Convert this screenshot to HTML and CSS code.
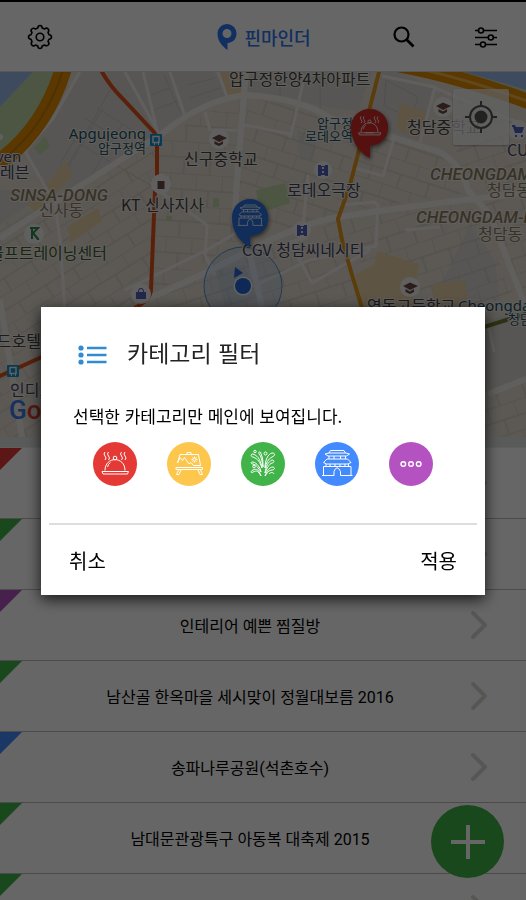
FILE: index.html
```html
<!DOCTYPE html>
<html lang="ko">
<head>
<meta charset="utf-8">
<meta name="viewport" content="width=device-width, initial-scale=1">
<title>핀마인더</title>
<link rel="stylesheet" href="styles.css">
</head>
<body>
<svg class="sprite" width="0" height="0" aria-hidden="true">
  <symbol id="dish" viewBox="0 0 44 44">
    <path d="M12 28.5C12 14 32 14 32 28.5M9 29.5H35.5L34.5 32H10ZM17 29.5h10M14.500 25q.5-3 3-4.500M12 10q-2 2 0 4t0 4M15.500 10q-2 2 0 4t0 4M28.500 10q-2 2 0 4t0 4M32 10q-2 2 0 4t0 4"/>
    <circle cx="22" cy="16" r="1.800"/>
  </symbol>
  <symbol id="easel" viewBox="0 0 44 44">
    <path d="M10.500 21L13 12.500H31.500L33.500 23.500H26.500L24 20.500L22 22L17.500 15.500L15.500 18.500L13 15.500L10.500 21M20 12.500V10.500H24V12.500M9 25.500H35.500V27.500H9ZM11.500 28L9.500 32.500H12L14 28M31 28L33 32.500H35.500L33.500 28M27.500 14.500V20.500M24.500 17.500H30.500M25.500 15.500L29.500 19.500M29.500 15.500L25.500 19.500"/>
    <circle cx="27.500" cy="17.500" r="1.600" fill="#fdc64c"/>
  </symbol>
  <symbol id="nature" viewBox="0 0 44 44">
    <path d="M20 34C18 28 16 26 12 28C9 29 10 32 12 30C16 28 17 29 20 34M20 30C19 25 16 21 12 20C9 20 10 22 12 22C16 23 17 26 20 30M21 26C20 20 18 14 12 12C9 12 10 15 12 15C17 17 19 20 21 26M22 25C21 18 20 14 18 12C17 9 20 9 20 12C22 16 22 20 22 25M24 26C24 18 27 12 31 11C35 11 34 14 31 15C27 17 25 21 24 26M24 31C25 24 27 20 31 18C34 18 33 21 31 21C28 22 26 26 24 31M24 34C26 29 28 25 32 25C35 26 33 28 31 28C28 28 26 31 24 34M28 32C30 30 32 30 33 32"/>
    <circle cx="24.500" cy="11.500" r="1.500"/><circle cx="14" cy="9.500" r="1.200"/><circle cx="13" cy="24.500" r="1.300"/>
  </symbol>
  <symbol id="gate" viewBox="0 0 44 44">
    <path d="M15.500 8.500H29L30.500 11L34.500 12L31.500 14H13L10 12L14 11ZM14 11H30.500M14 14V17M19 14V17M25.500 14V17M30.500 14V17M12 17H32.500L36 20.500L33 22H11.500L8.500 20.500ZM11 22V24M15 22V24M20 22V24M25 22V24M30 22V24M33.500 22V24M8.500 24.500H36M8.500 24.500V33M36 24.500V33M7 33.500H19V29.500Q22 22 25.500 29.500V33.500H37.500"/>
  </symbol>
  <symbol id="dots" viewBox="0 0 44 44">
    <g stroke-width="1.400"><circle cx="14.300" cy="22" r="2.300"/><circle cx="22" cy="22" r="2.300"/><circle cx="29.700" cy="22" r="2.300"/></g>
  </symbol>
  <symbol id="chevron" viewBox="0 0 18 30">
    <path d="M3 3L15 15L3 27" stroke-width="4" stroke-linecap="round" stroke-linejoin="round"/>
  </symbol>
</svg>

<div class="app">
  <header class="topbar">
    <button class="icon-button" aria-label="설정">
      <svg width="26" height="26" viewBox="0 0 26 26" fill="none" stroke="#000" stroke-width="1.600" stroke-linejoin="round"><path d="M10.800 4Q11 1.500 13 1.500T15.200 4L17.500 5Q19.500 3.200 21 4.800T21 8.500L22 10.800Q24.500 11 24.500 13T22 15.200L21 17.500Q22.800 19.500 21.200 21T17.500 21L15.200 22Q15 24.500 13 24.500T10.800 22L8.500 21Q6.500 22.800 5 21.200T5 17.500L4 15.200Q1.500 15 1.500 13T4 10.800L5 8.500Q3.200 6.500 4.800 5T8.500 5Z"/><circle cx="13" cy="13" r="3.800"/></svg>
    </button>
    <h1 class="brand">
      <svg width="20" height="26" viewBox="0 0 20 26" aria-hidden="true"><path fill="#2b75f0" fill-rule="evenodd" d="M10 0A9.500 9.500 0 0 1 19.500 9.500C19.500 15 16 18.500 10.500 19V26C5 22 .5 17 .5 9.500A9.500 9.500 0 0 1 10 0ZM10 5A4.500 4.500 0 1 0 10 14A4.500 4.500 0 1 0 10 5Z"/></svg>
      <span>핀마인더</span>
    </h1>
    <div class="tools">
      <button class="icon-button" aria-label="검색">
        <svg width="22" height="22" viewBox="0 0 22 22" fill="none" stroke="#000" stroke-width="2.200"><circle cx="8.500" cy="8.500" r="7"/><path d="M13.500 13.500L20.500 20.500" stroke-width="2.800"/></svg>
      </button>
      <button class="icon-button" aria-label="필터">
        <svg width="22" height="22" viewBox="0 0 22 22" fill="none" stroke="#000" stroke-width="1.600"><path d="M0 4.500H3.500M8.500 4.500H22M0 11.500H13M18.500 11.500H22M0 18.500H5.500M10.500 18.500H22"/><circle cx="6" cy="4.500" r="2.500"/><circle cx="15.800" cy="11.500" r="2.500"/><circle cx="8" cy="18.500" r="2.500"/></svg>
      </button>
    </div>
  </header>

  <section class="map" aria-label="지도">
    <svg class="map-canvas" viewBox="0 72 526 365" preserveAspectRatio="xMidYMid slice">
      <defs>
        <pattern id="blocksA" width="26" height="32" patternUnits="userSpaceOnUse" patternTransform="rotate(4)"><path d="M0 0H26M0 16H26M0 0V16M13 16V32"/></pattern>
        <pattern id="blocksB" width="32" height="28" patternUnits="userSpaceOnUse" patternTransform="rotate(-32)"><path d="M0 0H32M0 14H32M0 0V14M16 14V28"/></pattern>
        <pattern id="blocksC" width="30" height="28" patternUnits="userSpaceOnUse" patternTransform="rotate(18)"><path d="M0 0H30M0 14H30M0 0V14M15 14V28"/></pattern>
        <pattern id="blocksD" width="28" height="30" patternUnits="userSpaceOnUse" patternTransform="rotate(-18)"><path d="M0 0H28M0 15H28M0 0V15M14 15V30"/></pattern>
      </defs>
      <rect y="72" width="526" height="365" fill="#e6dfd4"/>
      <g fill="#d9d7d2">
        <path d="M80 72H215L227 98L160 135L70 190L42 185L28 152Z"/>
        <path d="M250 72H372L358 112L246 93Z"/>
        <path d="M382 72H400L435 88L420 142L368 122Z"/>
        <path d="M0 190H42L28 205L0 225Z"/>
        <path d="M297 130L318 138L310 160H300Z"/>
        <path d="M470 225L495 260L500 300L435 297Z"/>
        <path d="M485 320L526 310V375L485 393Z"/>
        <path d="M215 270L245 265L258 300L225 307Z"/>
      </g>
      <g class="blocks">
        <path fill="url(#blocksB)" d="M0 225L70 195L160 138L152 295L135 307H41V437H0Z"/>
        <path fill="url(#blocksA)" d="M160 138L240 97V240L152 295Z"/>
        <path fill="url(#blocksC)" d="M240 97L305 108L360 125L340 215L240 240ZM365 125L440 155L470 192L345 212Z"/>
        <path fill="url(#blocksD)" d="M152 297L340 220L360 307H152ZM345 220L470 202L520 307H365ZM440 92L526 125V195L478 190L460 165ZM480 202L526 198V295ZM485 395L526 375V437H485Z"/>
      </g>
      <g fill="none" stroke="#c9c6c1" stroke-width="1">
        <path d="M60 164L75 139M68 168L103 108M90 178L122 124M73 140L150 185M97 108L132 130M110 90L68 165M84 118L118 138M151 95L170 88M154 110L178 101M164 75L180 112M187 85L215 78M190 98L220 88M265 83H365M280 76V102M320 76V109M386 80L418 97L411 118L384 106Z"/>
      </g>
      <g fill="#e9d2a7">
        <path d="M42 190L65 160L73 175L38 213L27 205Z"/><path d="M218 72H245L240 97H228Z"/>
        <path d="M68 226L98 208L102 221L70 243Z"/><path d="M400 103L426 112L419 140L396 128Z"/>
        <path d="M377 251L419 264L412 307H362L355 274L374 265Z"/><path d="M434 284L465 280L468 307H432Z"/>
      </g>
      <g fill="#c0d6a5">
        <path d="M33 72H60L45 108L18 144L0 157V107Z"/><path d="M256 190L285 183L290 203L260 213Z"/><path d="M34 148L45 136L50 146L40 155ZM166 216h6v5h-6zM213 198h6v9h-6z"/>
      </g>
      <path fill="#9bbcec" d="M0 72H33L0 107ZM462 72H526V90Z"/>
      <path fill="#c6d9ae" d="M450 72H464L526 90V96Z"/>
      <g class="roads">
        <path d="M80 72L52 120L25 151L50 195M125 72L158 132M143 72L157 130M170 72L185 116M218 72L227 97M205 112L210 130L240 130M240 124L290 134M305 75L290 138M53 190L60 240L65 310M125 290L207 250L263 217M158 190L207 225L205 255L215 275M256 285L310 260L376 246L378 205L374 202L340 205M307 238L290 242L312 283L370 250M395 135L383 176L355 168M382 76L435 87L420 142M435 88L526 126M405 230L440 227M488 324L494 352M303 225L308 175"/>
        <path class="wide" d="M0 238L50 205L160 135Q205 99 246 95Q300 98 330 118L440 152Q462 165 468 190L490 215L525 305M246 72L238 165L234 225M150 298L205 273L270 240Q315 220 340 217Q400 207 526 193M243 225L262 307M488 394L526 379M0 300L22 437"/>
      </g>
      <g fill="none" stroke-linecap="round">
        <path d="M63 70Q46 125 5 158" stroke="#e08c00" stroke-width="17"/>
        <path d="M63 70Q46 125 5 158" stroke="#c57b08" stroke-width="2"/>
        <path d="M400 65Q460 76 535 104" stroke="#e08c00" stroke-width="15"/>
        <path d="M400 65Q460 76 535 104" stroke="#efb34a" stroke-width="3"/>
        <path d="M379 72L350 185L338 219L342 240L352 275L362 308" stroke="#e09a1a" stroke-width="4"/>
        <path d="M102 72Q110 86 122 98L152 130Q157 134 157 143V175M155 190L151 290Q150 300 135 308M42 357L0 376" stroke="#e2531a" stroke-width="4"/>
        <path d="M484 327L526 314" stroke="#77792b" stroke-width="4"/>
      </g>
      <circle cx="243" cy="286" r="39" fill="#5da3f0" fill-opacity=".15" stroke="#4a91db"/>
      <g fill="#f2f1ef"><circle cx="0" cy="137" r="3"/><circle cx="219" cy="139" r="10"/><circle cx="161" cy="184" r="10"/><circle cx="323" cy="170" r="9"/><circle cx="443" cy="107" r="10"/><circle cx="518" cy="130" r="10"/><circle cx="34" cy="234" r="10"/><circle cx="302" cy="230" r="9"/><circle cx="410" cy="287" r="10"/><circle cx="141" cy="294" r="10"/></g>
      <g fill="#6b4a40"><path d="M212 138L219 134.500L227 138L219 142ZM214.500 141L219 143.500L223 141V144L219 146L214.500 144Z"/><path d="M436 106L443 102.500L451 106L443 110ZM438.500 109L443 111.500L447 109V112L443 114L438.500 112Z"/><path d="M403 286L410 282.500L418 286L410 290ZM405.500 289L410 291.500L414 289V292L410 294L405.500 292Z"/><path d="M157.500 181h7v8h-7z"/></g>
      <g fill="#5360bb"><path fill-rule="evenodd" d="M318 165h3v1h4v-1h3v11h-3v-1h-4v1h-3ZM322 167v2h2v-2ZM322 171v2h2v-2Z"/><path fill-rule="evenodd" d="M297 225h3v1h4v-1h3v11h-3v-1h-4v1h-3ZM301 227v2h2v-2ZM301 231v2h2v-2Z"/><path fill-rule="evenodd" d="M136 292h2q0-4 3-4t3 4h2v7h-10ZM139 292h4q0-3-2-3t-2 3Z"/><path d="M512 125h3l1 2h8l-2 6h-7l-2-6h-1ZM515 135h2v2h-2zM521 135h2v2h-2z"/></g>
      <path d="M30 228h8l-5 5 5 6M32 228v11M37 239h2" stroke="#33884c" stroke-width="2" fill="none"/>
      <g><rect x="150" y="134" width="12" height="12" rx="1" fill="#1593ce"/><rect x="7" y="365" width="12" height="12" rx="1" fill="#1593ce"/><path d="M153 136.500h6v6h-6zM10 367.500h6v6h-6z" fill="none" stroke="#e5f4fc" stroke-width="1.500"/><path d="M154 144h1M158 144h1M11 375h1M15 375h1" stroke="#e5f4fc" stroke-width="2"/></g>
      <g class="labels">
        <text x="229" y="85">압구정한양4차아파트</text>
        <g class="station"><text class="latin" x="146" y="139" text-anchor="end">Apgujeong</text><text class="small" x="98" y="153">압구정역</text><text class="small" x="317" y="128">압구정</text><text class="small" x="305" y="141">로데오역</text><text class="latin" x="458" y="311">Cheongdam</text><text class="small" x="508" y="324">청담역</text></g>
        <g class="shop"><text class="latin" x="-4" y="162">ven</text><text x="0" y="178">레븐</text><text x="287" y="196">로데오극장</text><text x="242" y="256">CGV 청담씨네시티</text><text x="507" y="156">CU</text><text x="10" y="396">인디고</text></g>
        <text x="184" y="165">신구중학교</text>
        <text x="121" y="211">KT 신사지사</text>
        <text x="407" y="133">청담중학교</text>
        <text x="367" y="312">영동고등학교</text>
        <text x="41" y="347" text-anchor="end">드호텔</text>
        <text class="golf" x="107" y="259" text-anchor="end">골프트레이닝센터</text>
        <g class="district"><text class="latin" x="10" y="201">SINSA-DONG</text><text x="39" y="216">신사동</text><text class="latin" x="430" y="180">CHEONGDAM</text><text x="487" y="196">청담동</text><text class="latin" x="416" y="223">CHEONGDAM-DONG</text><text x="478" y="240">청담동</text></g>
      </g>
      <text class="google" x="9" y="419"><tspan fill="#3c78ec">G</tspan><tspan fill="#df3e32">o</tspan><tspan fill="#f2b60a">o</tspan></text>
      <path d="M235 267L243 273L234 278Z" fill="#2668d8"/><circle cx="243" cy="286" r="9.500" fill="#f5f5f5"/><circle cx="243" cy="286" r="8" fill="#2668d8"/>
      <g class="pin">
        <path fill="#2b73e3" d="M250 199A18 18 0 0 1 268 218C268 228 262 235 250 236V247C239 242 232 230 232 218A18 18 0 0 1 250 199Z"/><use href="#gate" x="232" y="198" width="36" height="36"/>
      </g>
      <g class="pin">
        <path fill="#d32b29" d="M370 109A18 18 0 0 1 388 128C388 138 382 144 370 146V158C359 153 351 140 351 128A18 18 0 0 1 370 109Z"/><use href="#dish" x="351" y="108" width="37" height="37"/>
      </g>
    </svg>
    <button class="locate" aria-label="현재 위치">
      <svg width="32" height="32" viewBox="0 0 32 32" fill="none" stroke="#555" stroke-width="2"><circle cx="16" cy="16" r="11"/><circle cx="16" cy="16" r="5.500" fill="#555"/><path d="M16 0V6M16 26V32M0 16H6M26 16H32"/></svg>
    </button>
  </section>

  <ul class="places">
    <li class="red"><a href="#"><span></span><svg class="chevron"><use href="#chevron"/></svg></a></li>
    <li class="green"><a href="#"><span></span><svg class="chevron"><use href="#chevron"/></svg></a></li>
    <li class="purple"><a href="#"><span>인테리어 예쁜 찜질방</span><svg class="chevron"><use href="#chevron"/></svg></a></li>
    <li class="green"><a href="#"><span>남산골 한옥마을 세시맞이 정월대보름 2016</span><svg class="chevron"><use href="#chevron"/></svg></a></li>
    <li class="blue"><a href="#"><span>송파나루공원(석촌호수)</span><svg class="chevron"><use href="#chevron"/></svg></a></li>
    <li class="green"><a href="#"><span>남대문관광특구 아동복 대축제 2015</span><svg class="chevron"><use href="#chevron"/></svg></a></li>
    <li class="green"><a href="#"><span></span><svg class="chevron"><use href="#chevron"/></svg></a></li>
  </ul>
  <button class="add" aria-label="추가"><svg width="34" height="34" viewBox="0 0 34 34" stroke="#fff" stroke-width="4"><path d="M17 0V34M0 17H34"/></svg></button>
</div>

<div class="overlay">
  <section class="dialog" role="dialog" aria-modal="true" aria-labelledby="filter-title">
    <div class="dialog-head">
      <svg width="29" height="20" viewBox="0 0 29 20" fill="#2f8bd4" aria-hidden="true"><circle cx="3" cy="3" r="2.600"/><circle cx="3" cy="10" r="2.600"/><circle cx="3" cy="17" r="2.600"/><path d="M9 1.800H28.500V4.200H9ZM9 8.800H28.500V11.200H9ZM9 15.800H28.500V18.200H9Z"/></svg>
      <h2 id="filter-title">카테고리 필터</h2>
    </div>
    <p>선택한 카테고리만 메인에 보여집니다.</p>
    <div class="categories">
      <button class="red" aria-label="음식"><svg><use href="#dish"/></svg></button>
      <button class="yellow" aria-label="전시"><svg><use href="#easel"/></svg></button>
      <button class="green" aria-label="축제"><svg><use href="#nature"/></svg></button>
      <button class="blue" aria-label="명소"><svg><use href="#gate"/></svg></button>
      <button class="purple" aria-label="기타"><svg><use href="#dots"/></svg></button>
    </div>
    <div class="actions"><button>취소</button><button>적용</button></div>
  </section>
</div>
</body>
</html>
```
FILE: styles.css
```css
* { box-sizing: border-box; }
body {
  margin: 0;
  background: #fff;
  color: #000;
  font-family: "Noto Sans CJK KR", sans-serif;
}
button {
  border: 0;
  padding: 0;
  background: none;
  color: inherit;
  font: inherit;
  cursor: pointer;
}
svg { display: block; }
.sprite { position: absolute; }

.red { --tone: #e53935; }
.yellow { --tone: #fdc64c; }
.green { --tone: #41b449; }
.blue { --tone: #448aff; }
.purple { --tone: #b452c1; }

.app {
  position: relative;
  height: 100vh;
  overflow: hidden;
}
.topbar {
  display: grid;
  grid-template-columns: 1fr auto 1fr;
  align-items: center;
  height: 72px;
  padding: 0 29px 0 27px;
  border-top: 2px solid #000;
  border-bottom: 1px solid #ddd;
}
.icon-button { justify-self: start; }
.brand {
  display: flex;
  align-items: center;
  gap: 7px;
  margin: 0;
  padding-left: 4px;
  color: #2b75f0;
  font-size: 18px;
  font-weight: 500;
  line-height: 26px;
}
.tools {
  display: flex;
  justify-self: end;
  gap: 60px;
}

.map {
  position: relative;
  height: 376px;
  padding-bottom: 11px;
  border-bottom: 1px solid #eee;
  background: #dfe3e2;
}
.map-canvas {
  width: 100%;
  height: 365px;
}
.blocks { stroke: none; }
pattern path {
  fill: none;
  stroke: #c8c2b8;
  stroke-width: 1;
}
.roads {
  fill: none;
  stroke: #f0eeeb;
  stroke-width: 3;
  stroke-linejoin: round;
}
.roads .wide { stroke-width: 6; }
.labels {
  fill: #444;
  stroke: #f1ede7;
  stroke-width: 2px;
  paint-order: stroke;
  font-size: 16px;
}
.labels .small { font-size: 13px; }
.labels .latin { font-family: "Noto Sans", sans-serif; font-size: 15px; }
.station { fill: #1b5366; }
.shop { fill: #444463; }
.golf { fill: #3e5c2b; }
.district { fill: #8d7e60; }
.labels .district .latin {
  font-family: Roboto, sans-serif;
  font-size: 17px;
  font-style: italic;
  font-weight: 500;
}
.google { font: 26px Roboto, sans-serif; font-weight: 500; }
.pin {
  fill: none;
  stroke: none;
  filter: drop-shadow(1px 2px 2px #0008);
}
.pin use { stroke: #fff; stroke-width: 1; }
.locate {
  position: absolute;
  top: 17px;
  right: 17px;
  display: grid;
  place-items: center;
  width: 56px;
  height: 56px;
  border-radius: 2px;
  background: #f5f5f5bb;
  box-shadow: 0 1px 2px #0004;
}

.places {
  margin: 0;
  padding: 0;
  list-style: none;
}
.places li {
  position: relative;
  height: 71px;
  border-bottom: 1px solid #bbb;
}
.places li::before {
  content: "";
  position: absolute;
  top: 0;
  left: 0;
  width: 22px;
  height: 22px;
  background: var(--tone);
  clip-path: polygon(0 0, 100% 0, 0 100%);
}
.places a {
  display: flex;
  align-items: center;
  height: 100%;
  padding: 0 38px 0 30px;
  color: #000;
  font-size: 16px;
  font-family: Roboto, "Noto Sans CJK KR", sans-serif;
  line-height: 24px;
  text-align: center;
  text-decoration: none;
}
.places span {
  flex: 1;
  padding-top: 4px;
}
.chevron {
  width: 18px;
  height: 30px;
  fill: none;
  stroke: #d8d6d2;
}
.add {
  position: absolute;
  right: 22px;
  bottom: 22px;
  display: grid;
  place-items: center;
  width: 73px;
  height: 73px;
  border-radius: 50%;
  background: #41b449;
}

.overlay {
  position: fixed;
  inset: 0;
  display: flex;
  align-items: center;
  justify-content: center;
  padding: 2px 41px 0;
  background: rgba(0, 0, 0, 0.6);
}
.dialog {
  width: 100%;
  max-width: 560px;
  padding: 29px 8px 0;
  background: #fff;
  box-shadow: 0 4px 14px rgba(0, 0, 0, 0.8);
}
.dialog-head {
  display: flex;
  align-items: center;
  gap: 20px;
  padding: 0 29px;
}
.dialog-head h2 {
  margin: 0;
  padding-bottom: 6px;
  color: #222;
  font-size: 23px;
  font-weight: 400;
  line-height: 32px;
}
.dialog p {
  margin: 29px 0 0;
  padding: 0 24px;
  font-size: 17px;
  line-height: 26px;
}
.categories {
  display: flex;
  justify-content: center;
  gap: 30px;
  padding: 13px 0 37px;
}
.categories button {
  width: 44px;
  height: 44px;
  border-radius: 50%;
  background: var(--tone);
}
.categories svg {
  width: 44px;
  height: 44px;
  fill: none;
  stroke: #fff;
  stroke-width: 1;
}
.actions {
  display: flex;
  justify-content: space-between;
  padding: 20px 20px 18px;
  border-top: 2px solid #ddd;
}
.actions button {
  font-size: 20px;
  line-height: 32px;
}
```
